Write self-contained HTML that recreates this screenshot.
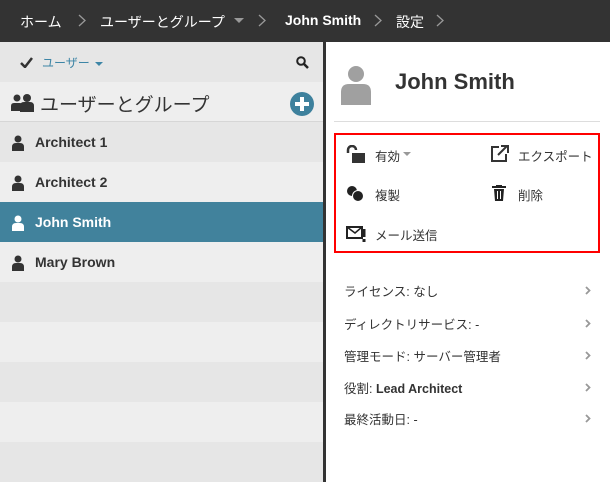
<!DOCTYPE html>
<html><head><meta charset="utf-8"><style>
*{margin:0;padding:0;box-sizing:border-box}
body{width:610px;height:482px;overflow:hidden;background:#fff;font-family:"Liberation Sans","Noto Sans CJK JP",sans-serif;color:#333;position:relative}
.abs{position:absolute}
.top{left:0;top:0;width:610px;height:42px;background:#333;color:#fff;font-size:14px}
.top span{position:absolute;top:12px}
.top svg.c{position:absolute;top:14px}
.left{left:0;top:42px;width:323px;height:440px;background:#eee}
.sep{left:323px;top:42px;width:3px;height:440px;background:#333}
.row{position:absolute;left:0;width:323px;height:40px;font-size:14px;font-weight:bold;color:#333}
.row span{position:absolute;left:35px;top:12px}
.row svg{position:absolute;left:12px;top:13px}
.rt{font-size:12.5px;color:#333}
.arr{position:absolute;left:585px}
</style></head><body>
<div class="abs top">
<span style="left:20px">ホーム</span>
<svg class="c" style="left:78px" width="8" height="13"><path d="M1 1l6 5.5L1 12" stroke="#999" stroke-width="1.3" fill="none"/></svg>
<span style="left:100px">ユーザーとグループ</span>
<svg class="abs" style="left:234px;top:18px" width="10" height="6"><path d="M0 0h10L5 5z" fill="#999"/></svg>
<svg class="c" style="left:258px" width="8" height="13"><path d="M1 1l6 5.5L1 12" stroke="#999" stroke-width="1.3" fill="none"/></svg>
<span style="left:285px;font-weight:bold">John Smith</span>
<svg class="c" style="left:374px" width="8" height="13"><path d="M1 1l6 5.5L1 12" stroke="#999" stroke-width="1.3" fill="none"/></svg>
<span style="left:396px">設定</span>
<svg class="c" style="left:436px" width="8" height="13"><path d="M1 1l6 5.5L1 12" stroke="#999" stroke-width="1.3" fill="none"/></svg>
</div>
<div class="abs left">
<div class="abs" style="left:0;top:0;width:323px;height:40px;background:#e6e6e6"></div>
<svg class="abs" style="left:20px;top:15px" width="13" height="11"><path d="M1 6l4 4 7-9" stroke="#333" stroke-width="2.5" fill="none"/></svg>
<span class="abs" style="left:42px;top:12px;font-size:12px;color:#3d85a6">ユーザー</span>
<svg class="abs" style="left:95px;top:20px" width="8" height="5"><path d="M0 0h8L4 4z" fill="#3d85a6"/></svg>
<svg class="abs" style="left:296px;top:14px" width="13" height="13"><circle cx="5" cy="5" r="3.8" stroke="#222" stroke-width="2" fill="none"/><path d="M8 8l4 4" stroke="#222" stroke-width="2.5"/></svg>
<div class="abs" style="left:0;top:40px;width:323px;height:40px;background:#eee;border-bottom:1px solid #d6d6d6"></div>
<svg class="abs" style="left:11px;top:52px" width="24" height="18"><circle cx="6" cy="4" r="3.5" fill="#333"/><circle cx="16" cy="4" r="4" fill="#333"/><path d="M0 17v-5q0-3 3-3h6q3 0 3 3v5z M9 18v-6q0-4 4-4h6q4 0 4 4v6z" fill="#333"/></svg>
<span class="abs" style="left:40px;top:48px;font-size:19px;color:#333">ユーザーとグループ</span>
<svg class="abs" style="left:290px;top:50px" width="24" height="24"><circle cx="12" cy="12" r="12" fill="#3e819d"/><path d="M12 5v14M5 12h14" stroke="#fff" stroke-width="4"/></svg>
</div>
<div class="row" style="top:122px;background:#e6e6e6"><svg width="12" height="16"><circle cx="6" cy="4" r="3.5" fill="#333"/><path d="M0 16v-4q0-4 4-4h4q4 0 4 4v4z" fill="#333"/></svg><span>Architect 1</span></div>
<div class="row" style="top:162px;background:#eee"><svg width="12" height="16"><circle cx="6" cy="4" r="3.5" fill="#333"/><path d="M0 16v-4q0-4 4-4h4q4 0 4 4v4z" fill="#333"/></svg><span>Architect 2</span></div>
<div class="row" style="top:202px;background:#41829c;color:#fff"><svg width="12" height="16"><circle cx="6" cy="4" r="3.5" fill="#fff"/><path d="M0 16v-4q0-4 4-4h4q4 0 4 4v4z" fill="#fff"/></svg><span>John Smith</span></div>
<div class="row" style="top:242px;background:#eee"><svg width="12" height="16"><circle cx="6" cy="4" r="3.5" fill="#333"/><path d="M0 16v-4q0-4 4-4h4q4 0 4 4v4z" fill="#333"/></svg><span>Mary Brown</span></div>
<div class="row" style="top:282px;background:#e6e6e6"></div>
<div class="row" style="top:322px;background:#eee"></div>
<div class="row" style="top:362px;background:#e6e6e6"></div>
<div class="row" style="top:402px;background:#eee"></div>
<div class="row" style="top:442px;background:#e6e6e6"></div>
<div class="abs sep"></div>

<svg class="abs" style="left:340px;top:66px" width="32" height="40"><circle cx="16" cy="8" r="8" fill="#a0a0a0"/><path d="M1 39v-13q0-8 8-8h14q8 0 8 8v13z" fill="#a0a0a0"/></svg>
<span class="abs" style="left:395px;top:69px;font-size:22px;font-weight:bold;color:#333">John Smith</span>
<div class="abs" style="left:334px;top:121px;width:266px;height:1px;background:#ddd"></div>
<div class="abs" style="left:334px;top:133px;width:266px;height:120px;border:2px solid #f00"></div>
<svg class="abs" style="left:346px;top:145px" width="20" height="18"><path d="M2 8V5a4 4 0 0 1 8 0" stroke="#333" stroke-width="2.5" fill="none"/><rect x="6" y="8" width="13" height="10" fill="#333"/></svg>
<span class="abs rt" style="left:375px;top:146px">有効</span>
<svg class="abs" style="left:403px;top:152px" width="8" height="5"><path d="M0 0h8L4 4z" fill="#999"/></svg>
<svg class="abs" style="left:491px;top:145px" width="18" height="17"><path d="M8 2H1v14h14V9" stroke="#333" stroke-width="2" fill="none"/><path d="M7 10l9-9M10 1h7v7" stroke="#333" stroke-width="2" fill="none"/></svg>
<span class="abs rt" style="left:518px;top:146px">エクスポート</span>
<svg class="abs" style="left:346px;top:185px" width="18" height="17"><circle cx="6" cy="6" r="5" fill="#222"/><circle cx="12" cy="11" r="5.5" fill="#222" stroke="#fff" stroke-width="1"/></svg>
<span class="abs rt" style="left:375px;top:185px">複製</span>
<svg class="abs" style="left:492px;top:185px" width="14" height="16"><path d="M0 2h14M5 2V0h4v2" stroke="#222" stroke-width="2" fill="none"/><path d="M2 4h10l-1 12H3z" fill="#222"/><path d="M5.5 6v8M8.5 6v8" stroke="#fff"/></svg>
<span class="abs rt" style="left:518px;top:185px">削除</span>
<svg class="abs" style="left:346px;top:225px" width="20" height="17"><path d="M1 2h15v11H1z" stroke="#222" stroke-width="2" fill="none"/><path d="M1 2l8 6 7-6" stroke="#222" stroke-width="1.5" fill="none"/><path d="M18 4v8" stroke="#222" stroke-width="3"/><rect x="16.5" y="14" width="3" height="3" fill="#222"/></svg>
<span class="abs rt" style="left:375px;top:225px">メール送信</span>

<span class="abs rt" style="left:344px;top:281px">ライセンス: なし</span>
<span class="abs rt" style="left:344px;top:314px">ディレクトリサービス: -</span>
<span class="abs rt" style="left:344px;top:346px">管理モード: サーバー管理者</span>
<span class="abs rt" style="left:344px;top:378px">役割: <b>Lead Architect</b></span>
<span class="abs rt" style="left:344px;top:409px">最終活動日: -</span>
<svg class="abs arr" style="top:286px" width="6" height="9"><path d="M1 1l3.5 3.5L1 8" stroke="#999" stroke-width="1.8" fill="none"/></svg>
<svg class="abs arr" style="top:319px" width="6" height="9"><path d="M1 1l3.5 3.5L1 8" stroke="#999" stroke-width="1.8" fill="none"/></svg>
<svg class="abs arr" style="top:351px" width="6" height="9"><path d="M1 1l3.5 3.5L1 8" stroke="#999" stroke-width="1.8" fill="none"/></svg>
<svg class="abs arr" style="top:383px" width="6" height="9"><path d="M1 1l3.5 3.5L1 8" stroke="#999" stroke-width="1.8" fill="none"/></svg>
<svg class="abs arr" style="top:414px" width="6" height="9"><path d="M1 1l3.5 3.5L1 8" stroke="#999" stroke-width="1.8" fill="none"/></svg>
</body></html>
